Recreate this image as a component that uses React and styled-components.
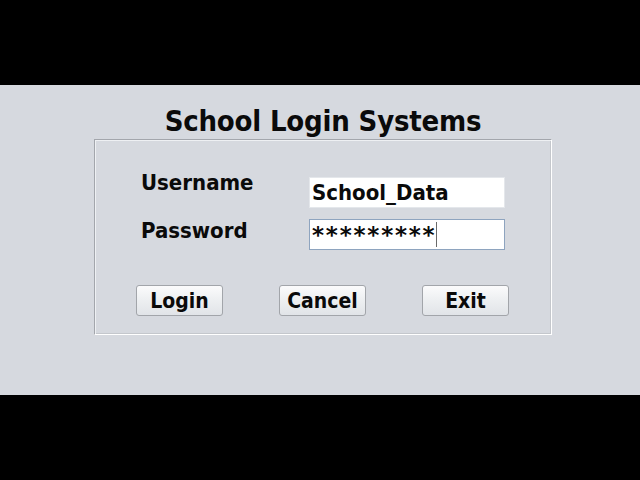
import styled, { createGlobalStyle } from "styled-components";

const GlobalStyle = createGlobalStyle`
  html, body {
    margin: 0;
    padding: 0;
    background: #000;
  }
  body {
    font-family: "DejaVu Sans Condensed", "DejaVu Sans", sans-serif;
  }
`;

const Screen = styled.div`
  width: 640px;
  height: 480px;
  display: flex;
  flex-direction: column;
  background: #000;
`;

const Letterbox = styled.div`
  height: 85px;
  flex: none;
  background: #000;
`;

const Stage = styled.main`
  height: 310px;
  flex: none;
  background: #d6d9df;
  display: flex;
  flex-direction: column;
  align-items: center;
  padding: 21px 0 0 6px;
  box-sizing: border-box;
`;

const Title = styled.h1`
  margin: 0 0 3px;
  font-size: 29px;
  line-height: 30px;
  font-weight: bold;
  letter-spacing: -0.2px;
  color: #0a0a0a;
`;

const Panel = styled.section`
  width: 458px;
  height: 196px;
  box-sizing: border-box;
  border: 1px solid;
  border-color: #a3a6ac #ffffff #ffffff #a3a6ac;
  box-shadow: inset 1px 1px 0 #eef0f3, inset -1px -1px 0 #c4c7cc;
  padding: 37px 0 0 46px;
`;

const Form = styled.div`
  display: grid;
  grid-template-columns: 168px 196px;
  row-gap: 11px;
`;

const Label = styled.span`
  align-self: start;
  margin-top: ${(p) => p.$top}px;
  font-size: 22px;
  line-height: 22px;
  font-weight: bold;
  color: #0a0a0a;
`;

const Field = styled.div`
  height: 31px;
  box-sizing: border-box;
  background: #fff;
  border: 1px solid ${(p) => (p.$focused ? "#8ea4bf" : "#e4e7eb")};
  padding: 0 2px;
  display: flex;
  align-items: center;
  font-size: 22px;
  font-weight: bold;
  color: #0a0a0a;
  white-space: nowrap;
`;

const Echo = styled.span`
  letter-spacing: ${(p) => p.$spacing}px;
  font-family: "DejaVu Sans", sans-serif;
  font-size: 23px;
`;

const Caret = styled.span`
  width: 1px;
  height: 25px;
  background: #6a6a6a;
  margin-left: 0;
`;

const Buttons = styled.div`
  display: flex;
  gap: 56px;
  margin: 35px 0 0 -5px;
`;

const Button = styled.button`
  width: 87px;
  height: 31px;
  box-sizing: border-box;
  border: 1px solid #a2a5aa;
  border-radius: 3px;
  background: linear-gradient(#fbfbfc, #eef0f2 45%, #e1e4e8);
  font-family: inherit;
  font-size: 21px;
  font-weight: bold;
  color: #0a0a0a;
  padding: 0;
`;

export default function App() {
  return (
    <>
      <GlobalStyle />
      <Screen>
        <Letterbox />
        <Stage>
          <Title>School Login Systems</Title>
          <Panel>
            <Form>
              <Label $top={-5}>Username</Label>
              <Field>School_Data</Field>
              <Label $top={1}>Password</Label>
              <Field $focused>
                <Echo $spacing={1.8}>*********</Echo>
                <Caret />
              </Field>
            </Form>
            <Buttons>
              <Button>Login</Button>
              <Button>Cancel</Button>
              <Button>Exit</Button>
            </Buttons>
          </Panel>
        </Stage>
        <Letterbox />
      </Screen>
    </>
  );
}
